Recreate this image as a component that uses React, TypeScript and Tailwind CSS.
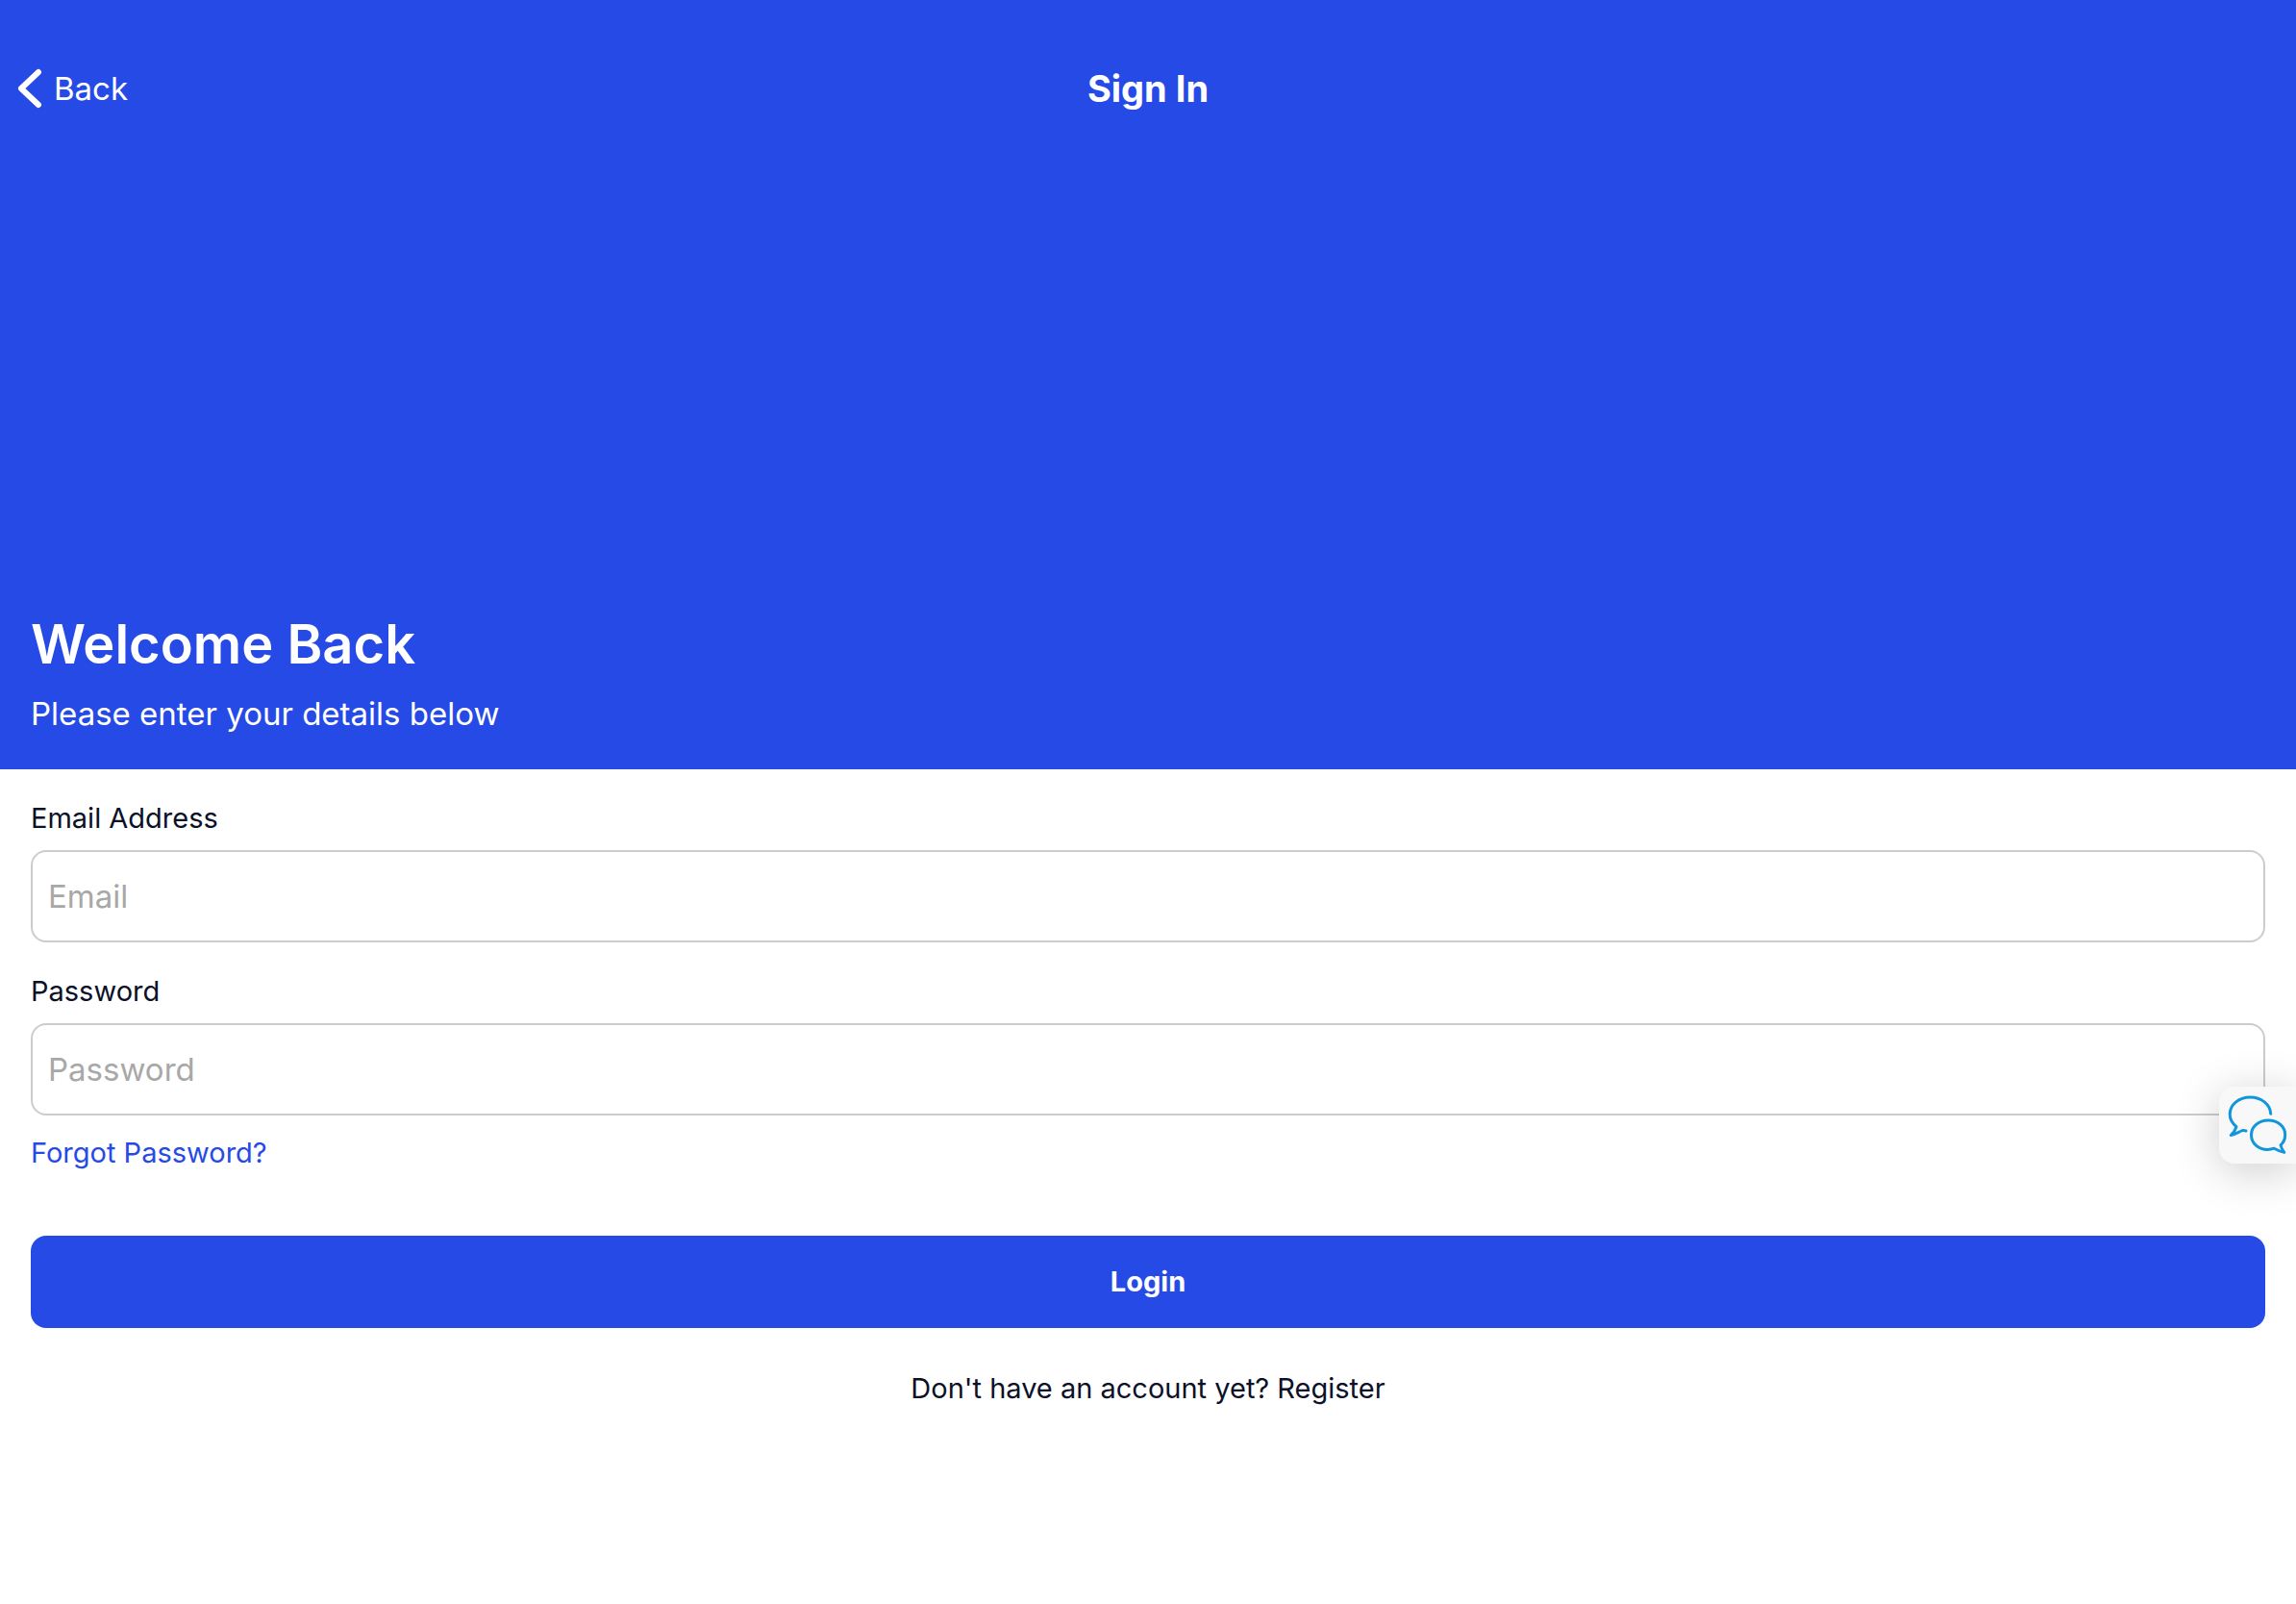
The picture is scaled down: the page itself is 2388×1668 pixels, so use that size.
import React from "react";

type FieldProps = { id: string; label: string; type: string; placeholder: string };

function Field({ id, label, type, placeholder }: FieldProps) {
  return (
    <div className="flex flex-col gap-[14px]">
      <label htmlFor={id} className="text-[29px] leading-[38px]">
        {label}
      </label>
      <input
        id={id}
        type={type}
        placeholder={placeholder}
        className="h-24 w-full rounded-2xl border-2 border-[#cccccc] bg-transparent px-4 text-[33px] placeholder:text-[#a8a8a8]"
      />
    </div>
  );
}

function ChatIcon() {
  return (
    <svg viewBox="0 0 80 80" fill="none" stroke="#1296db" strokeWidth="3" strokeLinecap="round" strokeLinejoin="round" className="size-20" aria-hidden="true">
      <path d="M53.7 28.3C53.3 18.4 43.8 10.9 32.3 10.9C20.5 10.9 11.2 18.8 11.2 28.6C11.2 33.6 13.8 38.4 18 41.7C17 44.8 15 48 12.2 50.6C17 49.3 20.5 47 24.8 45.4L28 46" />
      <path d="M57.3 64.2C55.3 64.9 53.2 65.4 50.6 65.4C40.9 65.4 33.5 58.8 33.5 50.2C33.5 41.6 41.1 35 51.2 35C61.4 35 68.7 41.8 68.7 50.2C68.7 54.6 66.9 58.2 64 60.8C64.6 63.6 66 66.2 67.8 68.4C64 67.6 60.8 66.2 57.3 64.2Z" />
    </svg>
  );
}

export default function App() {
  return (
    <div className="relative min-h-screen bg-white font-['Inter','Liberation_Sans',sans-serif] text-[#0a1128]">
      <header className="flex min-h-[800px] flex-col justify-between bg-[#264ae6] pt-12 pb-9 text-white">
        <nav className="grid h-[88px] grid-cols-[1fr_auto_1fr] items-center px-4">
          <button type="button" className="flex items-center gap-3 justify-self-start text-[33px] leading-[44px]">
            <svg viewBox="0 0 28 44" fill="none" stroke="currentColor" strokeWidth="6" strokeLinecap="round" strokeLinejoin="round" className="h-11 w-7" aria-hidden="true">
              <path d="M24 5L6 22L24 39" />
            </svg>
            Back
          </button>
          <h1 className="text-[38px] leading-[48px] font-bold">Sign In</h1>
        </nav>
        <div className="flex flex-col gap-[14px] px-8">
          <h2 className="text-[56px] leading-[72px] font-semibold">Welcome Back</h2>
          <p className="text-[33px] leading-[44px]">Please enter your details below</p>
        </div>
      </header>

      <main className="px-8 pt-8">
        <form className="flex flex-col" onSubmit={(event) => event.preventDefault()}>
          <div className="flex flex-col gap-8">
            <Field id="email" label="Email Address" type="email" placeholder="Email" />
            <Field id="password" label="Password" type="password" placeholder="Password" />
          </div>
          <a href="#forgot" className="mt-5 self-start text-[29px] leading-[38px] text-[#264ae6]">
            Forgot Password?
          </a>
          <button type="submit" className="mt-[67px] h-24 rounded-2xl bg-[#264ae6] text-[29px] leading-[38px] font-bold text-white">
            Login
          </button>
        </form>
        <p className="mt-11 text-center text-[29px] leading-[38px]">
          Don't have an account yet? <a href="#register">Register</a>
        </p>
      </main>

      <button
        type="button"
        aria-label="Open chat"
        className="absolute top-[1130px] right-0 rounded-l-2xl bg-[#f8f8f8] shadow-[0_8px_48px_rgba(0,0,0,0.2)]"
      >
        <ChatIcon />
      </button>
    </div>
  );
}
